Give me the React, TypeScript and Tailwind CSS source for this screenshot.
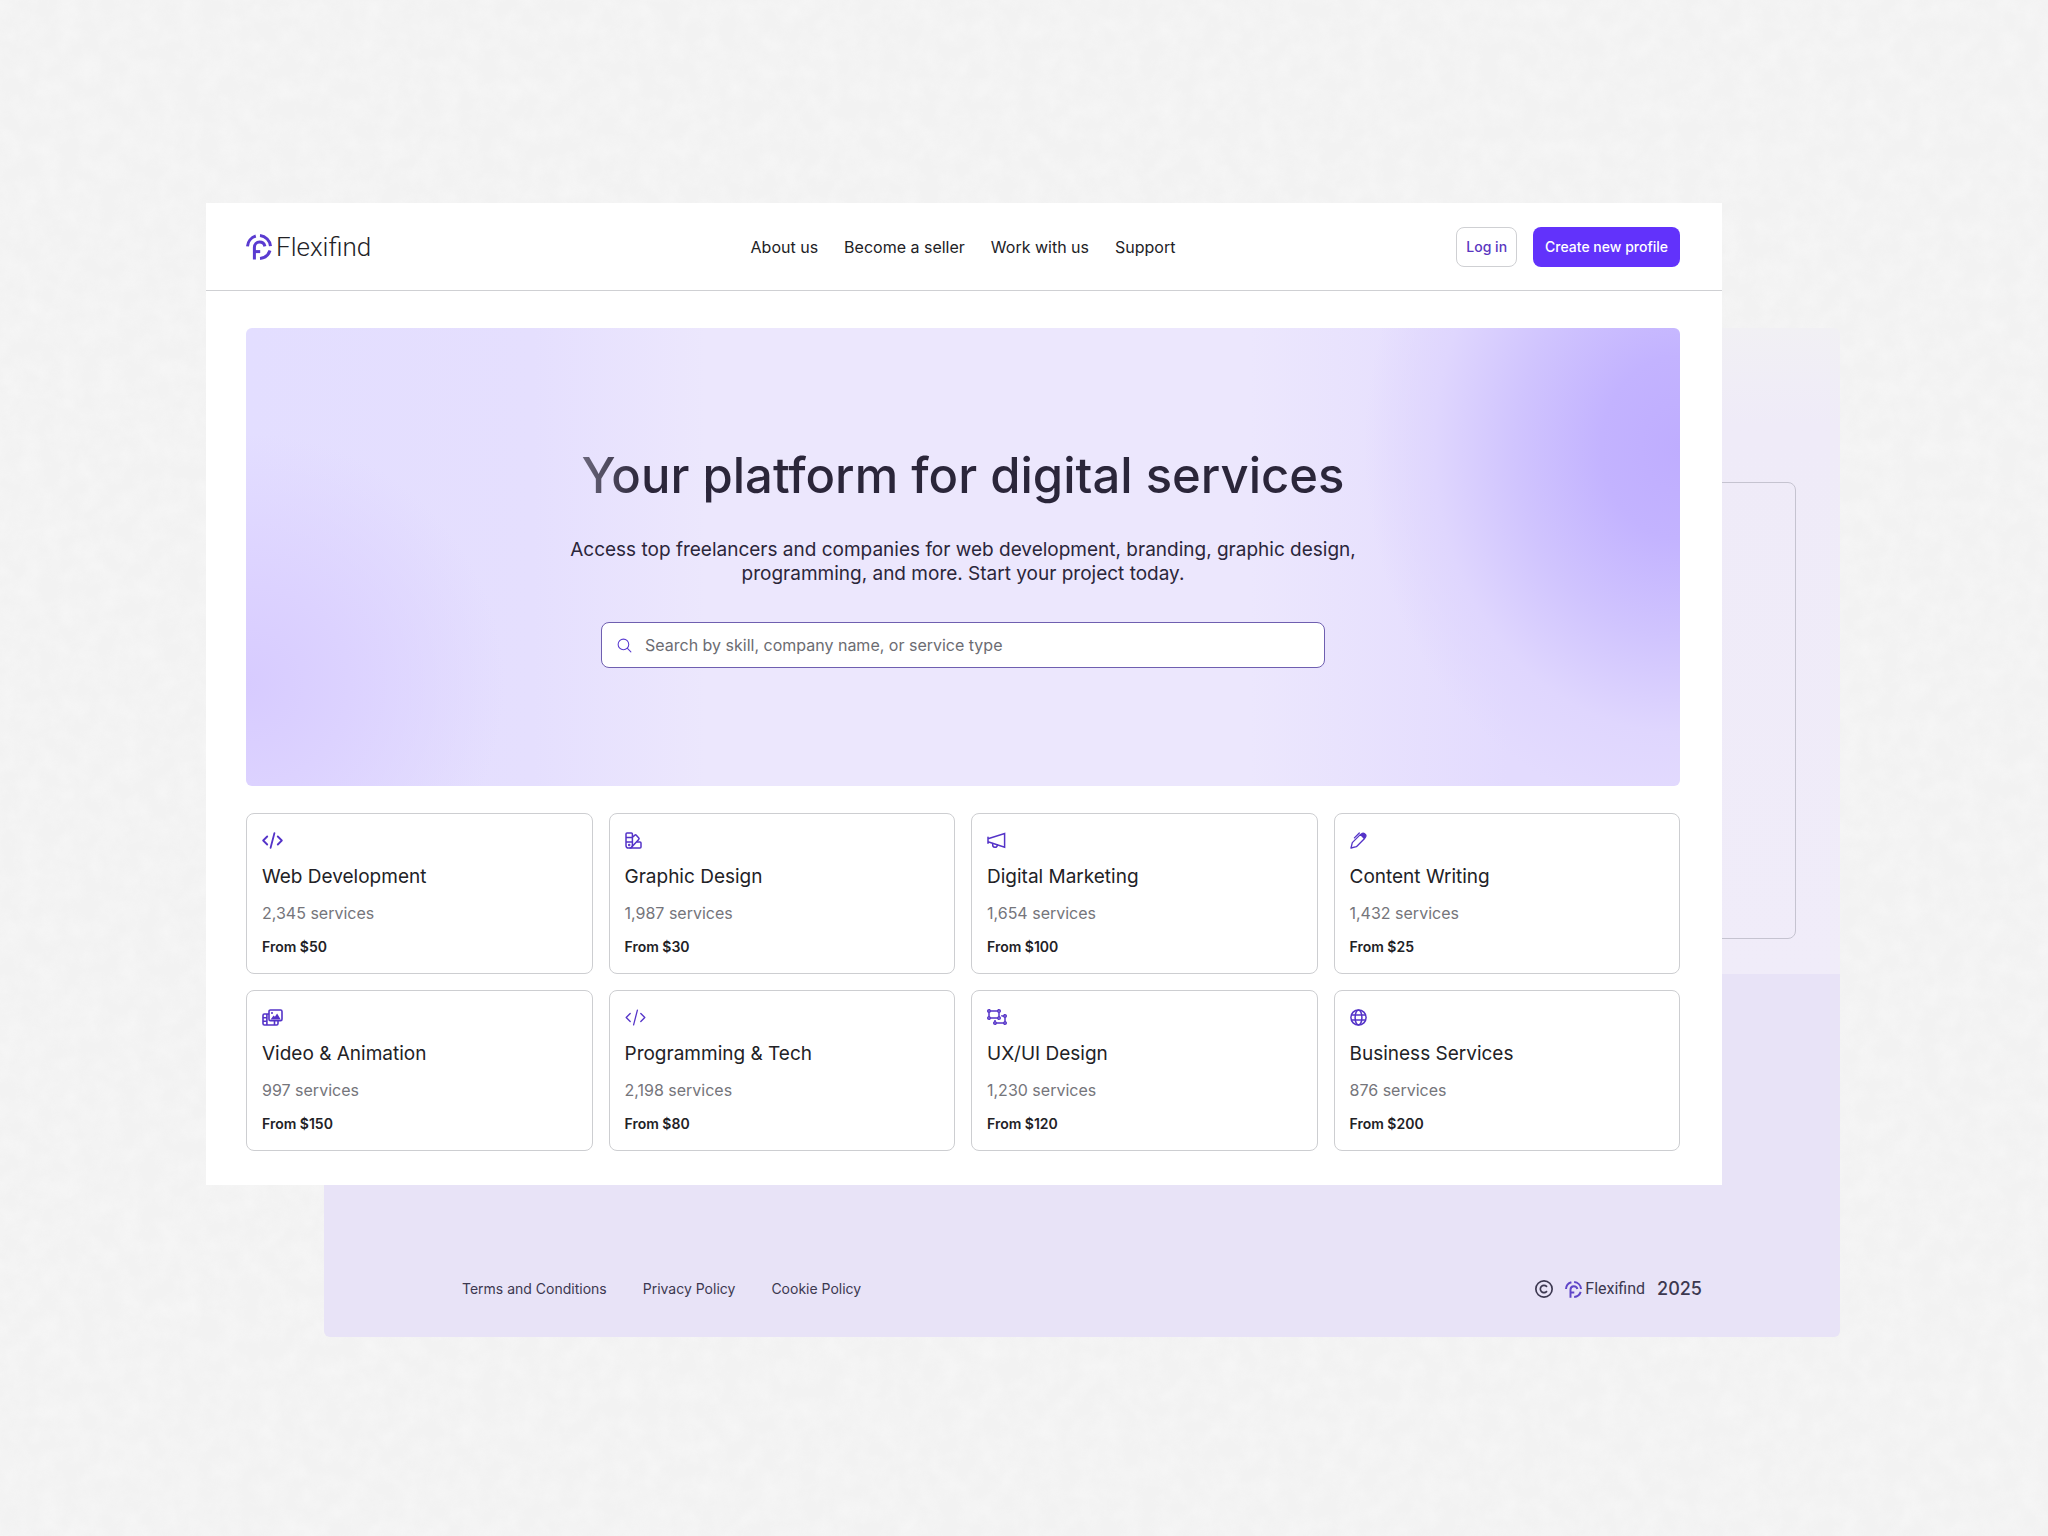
import type { ReactNode } from "react";
import { HiOutlineMagnifyingGlass } from "react-icons/hi2";
import { FaRegCopyright, FaRegObjectUngroup } from "react-icons/fa6";

const navLinks = ["About us", "Become a seller", "Work with us", "Support"];
const footerLinks = ["Terms and Conditions", "Privacy Policy", "Cookie Policy"];

const CodeIcon = ({ thin }: { thin?: boolean }) => (
  <svg viewBox="0 0 21 17" fill="none" stroke="currentColor" strokeWidth={thin ? 1.3 : 1.8} strokeLinecap="round" strokeLinejoin="round" className="h-[17px]">
    <path d="M5.2 4.5l-4 4 4 4M15.8 4.5l4 4-4 4M12.4 1.2L8.6 15.8" />
  </svg>
);

const SwatchIcon = () => (
  <svg viewBox="0 0 17 17" fill="none" stroke="currentColor" strokeWidth="1.5" strokeLinejoin="round" className="h-[17px]">
    <path d="M2 1h4.4a1 1 0 0 1 1 1v11.4a2.7 2.7 0 0 1-2.7 2.6H3.6A2.6 2.6 0 0 1 1 13.4V2a1 1 0 0 1 1-1z" />
    <path d="M1 5.6h6.4M1 10h6.4" />
    <path d="M7.4 5.2l2.5-2.1a1 1 0 0 1 1.4.1l2.5 2.9a1 1 0 0 1-.1 1.4l-7 7.5" />
    <path d="M11.8 10H15a1 1 0 0 1 1 1v4a1 1 0 0 1-1 1H4.5" />
    <circle cx="4.2" cy="13" r=".5" />
  </svg>
);

const MegaphoneIcon = () => (
  <svg viewBox="0 0 19 17" fill="none" stroke="currentColor" strokeWidth="1.5" strokeLinecap="round" className="h-[17px]">
    <path d="M1 5.3v5.9M1 6.8L17.6 1.6v13.6L1 9.8" />
    <path d="M5.7 11.4v1.4a2.3 2.3 0 0 0 4.6.4v-.4" />
  </svg>
);

const PenIcon = () => (
  <svg viewBox="0 0 17 17" fill="none" stroke="currentColor" strokeWidth="1.3" strokeLinecap="round" strokeLinejoin="round" className="h-[17px]">
    <path d="M1 16l1.3-5.4 8.2-8.2 4.1 4.1-8.2 8.2z" />
    <path d="M10.800 2.600l1-1a1.900 1.900 0 0 1 2.700 0l.9.9a1.900 1.900 0 0 1 0 2.700l-1 1z" fill="currentColor" />
    <path d="M9.300 1L4.400 5.900" />
  </svg>
);

const MediaIcon = () => (
  <svg viewBox="0 0 21 17" fill="none" stroke="currentColor" strokeWidth="1.6" strokeLinejoin="round" className="h-[17px]">
    <rect x="7" y="1" width="13" height="10.6" rx="1.4" />
    <path d="M8.6 10.400l3-3.900 1.300 1.200 2.200-3.200 3.600 5.900z" fill="currentColor" stroke="none" />
    <circle cx="10" cy="4" r="1" fill="currentColor" stroke="none" />
    <path d="M7 5H2.4A1.4 1.4 0 0 0 1 6.4v8.2A1.4 1.4 0 0 0 2.4 16h12.2a1.4 1.4 0 0 0 1.4-1.4v-3" />
    <path d="M4.9 5v11M1 8.7h3.9M1 12.3h3.9M12.500 11.6V16" />
  </svg>
);

const GlobeIcon = () => (
  <svg viewBox="0 0 17 17" fill="none" stroke="currentColor" strokeWidth="1.5" className="h-[17px]">
    <circle cx="8.5" cy="8.5" r="7.6" />
    <ellipse cx="8.5" cy="8.5" rx="3.4" ry="7.6" />
    <path d="M1.3 6h14.4M1.3 11h14.4" />
  </svg>
);

const categories: { title: string; services: string; price: string; icon: ReactNode }[] = [
  { title: "Web Development", services: "2,345", price: "$50", icon: <CodeIcon /> },
  { title: "Graphic Design", services: "1,987", price: "$30", icon: <SwatchIcon /> },
  { title: "Digital Marketing", services: "1,654", price: "$100", icon: <MegaphoneIcon /> },
  { title: "Content Writing", services: "1,432", price: "$25", icon: <PenIcon /> },
  { title: "Video & Animation", services: "997", price: "$150", icon: <MediaIcon /> },
  { title: "Programming & Tech", services: "2,198", price: "$80", icon: <CodeIcon thin /> },
  { title: "UX/UI Design", services: "1,230", price: "$120", icon: <FaRegObjectUngroup className="size-5" /> },
  { title: "Business Services", services: "876", price: "$200", icon: <GlobeIcon /> },
];

const LogoMark = ({ className }: { className?: string }) => (
  <svg viewBox="0 0 26 26" fill="none" stroke="currentColor" strokeWidth="3" className={className} aria-hidden="true">
    <path d="M1.5 12.3A11.5 11.5 0 0 1 9.8 2" />
    <path d="M14 1.6A11.5 11.5 0 0 1 24.5 12.2" />
    <path d="M24 16.6A11.5 11.5 0 0 1 14 24.4" />
    <path d="M8.4 25.6V13.4C8.4 10.2 10.7 8 13.5 8C16.2 8 18.3 9.6 18.9 12.3" />
    <path d="M8.4 17.6H14.2" />
  </svg>
);

/* Faint paper grain behind the panels */
const PaperTexture = () => (
  <svg className="absolute inset-0 size-full opacity-30" aria-hidden="true">
    <filter id="paper">
      <feTurbulence type="fractalNoise" baseFrequency="0.05" numOctaves="3" seed="4" />
      <feColorMatrix values="0 0 0 0 1  0 0 0 0 1  0 0 0 0 1  1.6 0 0 0 -0.5" />
    </filter>
    <rect width="100%" height="100%" filter="url(#paper)" />
  </svg>
);

const Header = () => (
  <header className="flex items-center border-b border-[#cfd0d3] pt-6 pr-[42px] pb-[23px] pl-10">
    <div className="flex flex-1">
      <a href="#" className="flex items-center gap-1 text-[#222226]">
        <LogoMark className="size-[26px] text-[#5a3bd0]" />
        <span className="font-['Roboto',sans-serif] text-[26px] leading-8 font-light">Flexifind</span>
      </a>
    </div>
    <nav className="flex gap-[26px] text-base text-[#222226]">
      {navLinks.map((link) => (
        <a key={link} href="#">
          {link}
        </a>
      ))}
    </nav>
    <div className="flex flex-1 justify-end gap-4 text-sm font-medium">
      <button className="h-10 rounded-lg border border-[#cfd0d3] px-[9px] text-[#5a36c0]">Log in</button>
      <button className="h-10 rounded-lg bg-[#6232fb] px-3 text-white">Create new profile</button>
    </div>
  </header>
);

const Hero = () => (
  <section className="flex min-h-[458px] flex-col items-center justify-center rounded-md bg-[#ece7fd] bg-[radial-gradient(ellipse_22%_80%_at_100%_26%,#bfadff_0%,#c3b3ff_25%,#d0c4fe_52%,#dfd6fe_78%,transparent_100%),radial-gradient(ellipse_18%_55%_at_0%_78%,#d7cbff_0%,#dcd2ff_40%,transparent_100%),linear-gradient(90deg,#e3deff_0%,#e5dffe_20%,#ece7fd_32%,#ece7fd_70%,#e3dbfe_88%)] text-center">
    <h1 className="bg-linear-to-r from-[#6b677b] via-[#2b263a] via-8% to-[#2b263a] bg-clip-text text-[49px] leading-[60px] font-medium text-transparent">
      Your platform for digital services
    </h1>
    <p className="mt-8 max-w-[800px] text-[19px] leading-6 text-[#2b263a]">
      Access top freelancers and companies for web development, branding, graphic design, programming, and more. Start
      your project today.
    </p>
    <label className="mt-9 flex h-[46px] w-full max-w-[724px] items-center gap-3 rounded-lg border border-[#6f5fb0] bg-white px-[14px]">
      <HiOutlineMagnifyingGlass className="size-[17px] shrink-0 text-[#5a3bd0]" />
      <input
        type="text"
        aria-label="Search services"
        placeholder="Search by skill, company name, or service type"
        className="w-full bg-transparent text-base text-[#222226] outline-none placeholder:text-[#6c6c72]"
      />
    </label>
  </section>
);

const Categories = () => (
  <section className="mt-[27px] grid grid-cols-4 gap-4">
    {categories.map(({ title, services, price, icon }) => (
      <a key={title} href="#" className="flex flex-col rounded-lg border border-[#cdced1] bg-white px-[15px] py-4 text-[#222226]">
        <div className="flex h-5 items-center text-[#5433c8]">{icon}</div>
        <h2 className="mt-[15px] text-[19px] leading-6">{title}</h2>
        <p className="mt-[14px] text-base leading-5 text-[#75757b]">{services} services</p>
        <p className="mt-[14px] text-sm leading-5 font-semibold">From {price}</p>
      </a>
    ))}
  </section>
);

const Footer = () => (
  <footer className="flex flex-1 items-end justify-between bg-[#e8e3f7] px-[138px] pb-9 text-[#3c3850]">
    <div className="flex gap-9 text-sm leading-6">
      {footerLinks.map((link) => (
        <a key={link} href="#">
          {link}
        </a>
      ))}
    </div>
    <div className="flex items-center gap-3 leading-6">
      <FaRegCopyright className="size-[18px]" />
      <div className="flex items-center gap-[3px]">
        <LogoMark className="size-[17px] text-[#5f45c8]" />
        <span className="font-['Roboto',sans-serif] text-base leading-6">Flexifind</span>
      </div>
      <span className="text-lg leading-6 font-medium">2025</span>
    </div>
  </footer>
);

const App = () => {
  return (
    <div className="relative min-h-screen bg-[#f2f2f2] pt-[203px] pr-[208px] pl-[206px] font-['Inter',sans-serif]">
      <PaperTexture />
      <div className="relative grid">
        {/* Lower page section, partly hidden behind the main panel */}
        <div className="col-start-1 row-start-1 mt-[125px] ml-[118px] flex flex-col overflow-hidden rounded-md">
          <div className="min-h-[646px] bg-linear-to-b from-[#f1f0f4] via-[#efebf8] via-15% to-[#f0ecf9] px-11 pt-[154px]">
            <div className="h-[457px] rounded-lg border border-[#c5c3d0]" />
          </div>
          <Footer />
        </div>

        <main className="z-10 col-start-1 row-start-1 mr-[118px] mb-[152px] bg-white">
          <Header />
          <div className="pt-[37px] pr-[42px] pb-[34px] pl-10">
            <Hero />
            <Categories />
          </div>
        </main>
      </div>
    </div>
  );
};

export default App;
